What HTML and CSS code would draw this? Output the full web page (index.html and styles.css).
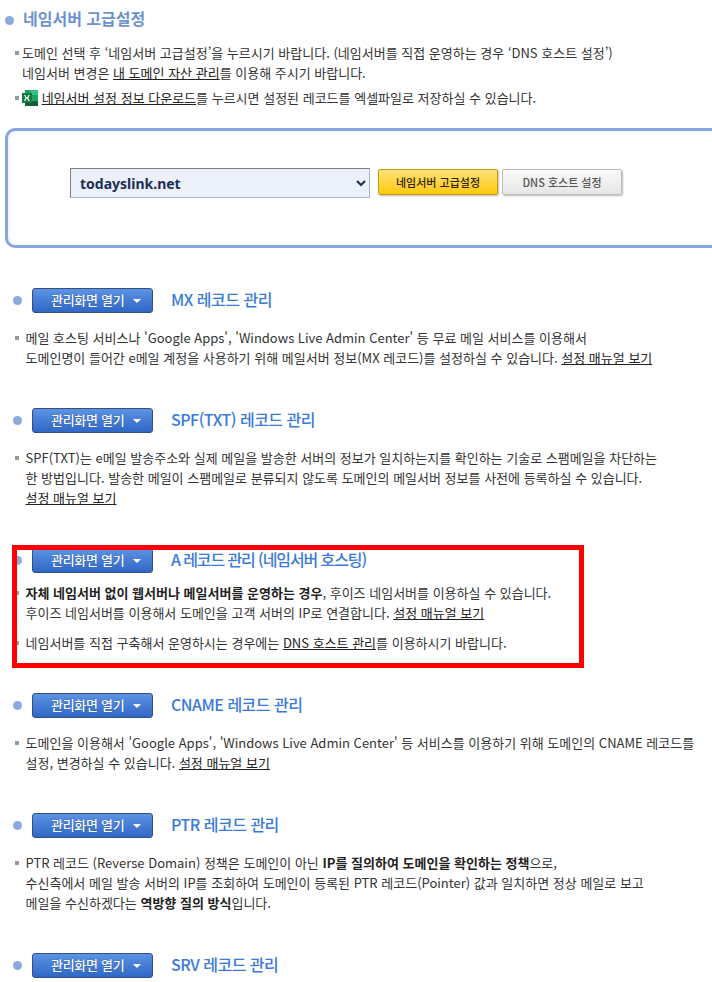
FILE: index.html

```html
<!DOCTYPE html>
<html lang="ko">
<head>
    <meta charset="UTF-8">
    <meta name="viewport" content="width=device-width, initial-scale=1.0">
    <title>네임서버 고급설정</title>
    <link rel="stylesheet" href="styles.css">
</head>
<body>
  <main class="page">

    <h2 class="page-title">네임서버 고급설정</h2>
    <ul class="notes notes-top">
      <li>도메인 선택 후 ‘네임서버 고급설정’을 누르시기 바랍니다. (네임서버를 직접 운영하는 경우 ‘DNS 호스트 설정’)<br>네임서버 변경은 <a href="#">내 도메인 자산 관리</a>를 이용해 주시기 바랍니다.</li>
      <li class="excel-row">
        <svg class="excel-icon" width="16" height="16" viewBox="0 0 16 16">
          <rect x="3" y="0" width="13" height="16" fill="#21a366"/>
          <rect x="9" y="0" width="7" height="5" fill="#33c481"/>
          <rect x="3" y="11" width="13" height="5" fill="#185c37"/>
          <rect x="0" y="3" width="10" height="10" fill="#107c41"/>
          <path d="M2.6 5 L4.2 8 L2.6 11 M7.2 5 L5.6 8 L7.2 11 M4.2 8 L5.6 8" fill="none" stroke="#fff" stroke-width="1.3"/>
        </svg>
        <a href="#">네임서버 설정 정보 다운로드</a>를 누르시면 설정된 레코드를 엑셀파일로 저장하실 수 있습니다.
      </li>
    </ul>

    <div class="domain-box">
      <select class="domain-select">
        <option>todayslink.net</option>
      </select>
      <button class="btn btn-yellow">네임서버 고급설정</button>
      <button class="btn btn-gray">DNS 호스트 설정</button>
    </div>

    <section class="record">
      <div class="record-head">
        <button class="open-btn">관리화면 열기<span class="caret"></span></button>
        <h3>MX 레코드 관리</h3>
      </div>
      <ul class="notes">
        <li>메일 호스팅 서비스나 'Google Apps', 'Windows Live Admin Center' 등 무료 메일 서비스를 이용해서<br>도메인명이 들어간 e메일 계정을 사용하기 위해 메일서버 정보(MX 레코드)를 설정하실 수 있습니다. <a href="#">설정 매뉴얼 보기</a></li>
      </ul>
    </section>

    <section class="record">
      <div class="record-head">
        <button class="open-btn">관리화면 열기<span class="caret"></span></button>
        <h3>SPF(TXT) 레코드 관리</h3>
      </div>
      <ul class="notes">
        <li>SPF(TXT)는 e메일 발송주소와 실제 메일을 발송한 서버의 정보가 일치하는지를 확인하는 기술로 스팸메일을 차단하는<br>한 방법입니다. 발송한 메일이 스팸메일로 분류되지 않도록 도메인의 메일서버 정보를 사전에 등록하실 수 있습니다.<br><a href="#">설정 매뉴얼 보기</a></li>
      </ul>
    </section>

    <section class="record record-marked">
      <div class="record-head">
        <button class="open-btn">관리화면 열기<span class="caret"></span></button>
        <h3 class="tight">A 레코드 관리 (네임서버 호스팅)</h3>
      </div>
      <ul class="notes notes-wide">
        <li><strong>자체 네임서버 없이 웹서버나 메일서버를 운영하는 경우</strong>, 후이즈 네임서버를 이용하실 수 있습니다.<br>후이즈 네임서버를 이용해서 도메인을 고객 서버의 IP로 연결합니다. <a href="#">설정 매뉴얼 보기</a></li>
        <li>네임서버를 직접 구축해서 운영하시는 경우에는 <a href="#">DNS 호스트 관리</a>를 이용하시기 바랍니다.</li>
      </ul>
      <div class="red-mark"></div>
    </section>

    <section class="record">
      <div class="record-head">
        <button class="open-btn">관리화면 열기<span class="caret"></span></button>
        <h3>CNAME 레코드 관리</h3>
      </div>
      <ul class="notes">
        <li>도메인을 이용해서 'Google Apps', 'Windows Live Admin Center' 등 서비스를 이용하기 위해 도메인의 CNAME 레코드를<br>설정, 변경하실 수 있습니다. <a href="#">설정 매뉴얼 보기</a></li>
      </ul>
    </section>

    <section class="record">
      <div class="record-head">
        <button class="open-btn">관리화면 열기<span class="caret"></span></button>
        <h3>PTR 레코드 관리</h3>
      </div>
      <ul class="notes">
        <li>PTR 레코드 (Reverse Domain) 정책은 도메인이 아닌 <strong>IP를 질의하여 도메인을 확인하는 정책</strong>으로,<br>수신측에서 메일 발송 서버의 IP를 조회하여 도메인이 등록된 PTR 레코드(Pointer) 값과 일치하면 정상 메일로 보고<br>메일을 수신하겠다는 <strong>역방향 질의 방식</strong>입니다.</li>
      </ul>
    </section>

    <section class="record">
      <div class="record-head">
        <button class="open-btn">관리화면 열기<span class="caret"></span></button>
        <h3>SRV 레코드 관리</h3>
      </div>
    </section>

  </main>
</body>
</html>
```

FILE: styles.css

```css
html, body {
    margin: 0;
    height: 982px;
    overflow: hidden;
    background-color: #fff;
}
body {
    font-family: "Noto Sans CJK KR", "Noto Sans", sans-serif;
    font-size: 13px;
    line-height: 20px;
    color: #333;
}
a {
    color: #222;
    text-decoration: underline;
}
strong {
    color: #222;
    font-weight: 700;
}
.page {
    width: 712px;
    padding-top: 5px;
    overflow: hidden;
}
.page-title {
    position: relative;
    margin: 0 0 12px 23px;
    height: 26px;
    line-height: 26px;
    font-size: 16px;
    font-weight: 700;
    color: #6d93cf;
}
.page-title::before,
.record-head::before {
    content: "";
    width: 9px;
    height: 9px;
    border-radius: 50%;
    background-color: #8aa9dc;
}
.page-title::before {
    position: absolute;
    left: -18px;
    top: 11px;
}
.notes {
    list-style: none;
    margin: 15px 0 0;
    padding: 0 0 0 25.5px;
}
.notes li {
    position: relative;
}
.notes li::before {
    content: "";
    position: absolute;
    left: -10.5px;
    top: 8px;
    width: 4px;
    height: 4px;
    background-color: #999;
}
.notes-top {
    margin: 0;
    padding-left: 22px;
}
.notes-top li::before {
    left: -7px;
}
.notes-top .excel-row {
    margin-top: 5px;
}
.excel-icon {
    vertical-align: -3px;
}
.notes-wide {
    margin-top: 10px;
}
.notes-wide li + li {
    margin-top: 10px;
}
.domain-box {
    display: flex;
    align-items: flex-start;
    box-sizing: border-box;
    width: 780px;
    height: 120px;
    margin: 20px 0 0 5px;
    padding: 37px 0 0 62px;
    border: 3px solid #87a5de;
    border-radius: 10px;
    box-shadow: inset 0 0 4px #e8e8e8;
}
.domain-select {
    width: 300px;
    height: 30px;
    padding-left: 5px;
    margin-right: 8px;
    font-family: "Noto Sans", sans-serif;
    font-size: 14px;
    font-weight: 700;
    color: #1b2f55;
    background-color: #ebf0fb;
    border: 1px solid #a9b7d6;
    border-top-color: #808080;
    border-left-color: #808080;
    border-radius: 0;
}
.btn {
    width: 120px;
    height: 26px;
    margin: 1px 4px 0 0;
    padding: 0;
    font-family: "Noto Sans CJK KR", sans-serif;
    font-size: 11px;
    font-weight: 500;
    border-radius: 2px;
    box-shadow: 1px 1px 2px #bbb;
}
.btn-yellow {
    color: #2e2300;
    border: 1px solid #c99a10;
    background: linear-gradient(#fde37a, #ffc90e);
}
.btn-gray {
    color: #555;
    border: 1px solid #bbb;
    background: linear-gradient(#fafafa, #e6e6e6);
}
.record {
    position: relative;
    margin-top: 40px;
}
.record-head {
    display: flex;
    align-items: center;
    height: 25px;
    padding-left: 13px;
}
.record-head::before {
    flex: none;
    margin-right: 10px;
}
.record-head h3 {
    margin: -4px 0 0 18px;
    font-size: 16px;
    font-weight: 500;
    letter-spacing: -0.5px;
    color: #3a7bd8;
}
.record-head h3.tight {
    letter-spacing: -1.1px;
}
.open-btn {
    display: flex;
    align-items: center;
    justify-content: flex-start;
    box-sizing: border-box;
    flex: none;
    width: 121px;
    height: 25px;
    padding: 0 0 2px 18px;
    font-family: "Noto Sans CJK KR", sans-serif;
    font-size: 13px;
    font-weight: 500;
    letter-spacing: -0.3px;
    color: #fff;
    text-shadow: 0 0 1px #1d4590;
    border: 1px solid #33507f;
    border-radius: 3px;
    background: linear-gradient(#5c93e3, #2f67c6);
}
.caret {
    width: 0;
    height: 0;
    margin: 2px 0 0 9px;
    border-left: 4px solid transparent;
    border-right: 4px solid transparent;
    border-top: 4px solid #fff;
}
.red-mark {
    position: absolute;
    left: 12px;
    top: -3px;
    box-sizing: border-box;
    width: 572px;
    height: 123px;
    border: 5px solid #f00;
}
```
